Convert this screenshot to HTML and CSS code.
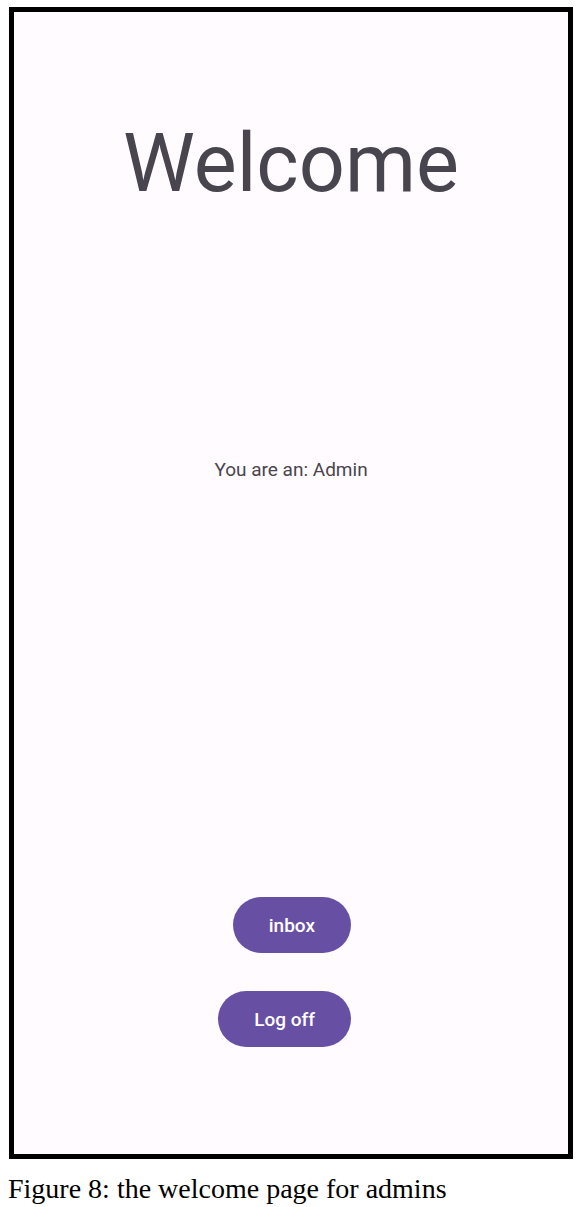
FILE: index.html
```html
<!DOCTYPE html>
<html>
<head>
<meta charset="utf-8">
<link rel="stylesheet" href="styles.css">
</head>
<body>
<div class="frame">
  <h1 class="title">Welcome</h1>
  <p class="role">You are an: Admin</p>
  <div class="actions">
    <button class="btn">inbox</button>
    <button class="btn">Log off</button>
  </div>
</div>
<p class="caption">Figure 8: the welcome page for admins</p>
</body>
</html>
```
FILE: styles.css
```css
html, body {
  margin: 0;
  padding: 0;
  background: #ffffff;
}
.frame {
  box-sizing: border-box;
  width: 564px;
  height: 1152px;
  margin: 7px 0 0 9px;
  border: 5px solid #000000;
  background: #fffbfe;
  display: flex;
  flex-direction: column;
  font-family: Roboto, "Noto Sans", sans-serif;
}
.title {
  margin: 111px 0 0;
  font-size: 81px;
  line-height: 82px;
  font-weight: 400;
  color: #49454f;
  text-align: center;
}
.role {
  margin: 254px 0 0;
  font-size: 19px;
  line-height: 22px;
  color: #49454f;
  text-align: center;
}
.actions {
  margin-top: 416px;
  display: flex;
  flex-direction: column;
  align-items: flex-end;
  gap: 38px;
  padding-right: 217px;
}
.btn {
  height: 56px;
  border: none;
  border-radius: 28px;
  background: #6750a4;
  color: #ffffff;
  font-family: Roboto, "Noto Sans", sans-serif;
  font-size: 19px;
  font-weight: 500;
  padding: 0 36px;
}
.caption {
  margin: 14px 0 0 8px;
  font-family: "Liberation Serif", "Times New Roman", serif;
  font-size: 28px;
  line-height: 32px;
  color: #000000;
}
```
